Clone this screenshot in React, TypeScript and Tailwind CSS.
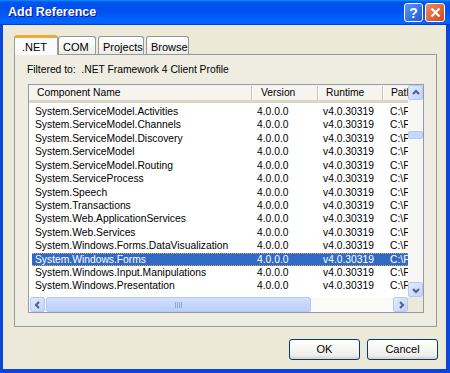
import React from "react";

const rows = [
  "System.ServiceModel.Activities",
  "System.ServiceModel.Channels",
  "System.ServiceModel.Discovery",
  "System.ServiceModel",
  "System.ServiceModel.Routing",
  "System.ServiceProcess",
  "System.Speech",
  "System.Transactions",
  "System.Web.ApplicationServices",
  "System.Web.Services",
  "System.Windows.Forms.DataVisualization",
  "System.Windows.Forms",
  "System.Windows.Input.Manipulations",
  "System.Windows.Presentation",
];

function Arrow({ dir }: { dir: "up" | "down" | "left" | "right" }) {
  const d = {
    up: "M2 6 L5 3 L8 6",
    down: "M2 4 L5 7 L8 4",
    left: "M6 2 L3 5 L6 8",
    right: "M4 2 L7 5 L4 8",
  }[dir];
  return (
    <svg width="10" height="10" viewBox="0 0 10 10">
      <path d={d} fill="none" stroke="#4D6185" strokeWidth="2" />
    </svg>
  );
}

function ScrollButton({ dir }: { dir: "up" | "down" | "left" | "right" }) {
  return (
    <div className="w-[15px] h-[15px] flex items-center justify-center rounded-[2px] border border-[#B5C9F5] bg-[linear-gradient(135deg,#E1EAFE,#C2D4FC)]">
      <Arrow dir={dir} />
    </div>
  );
}

function HeaderCell({ label, w, pl, first }: { label: string; w: string; pl: string; first?: boolean }) {
  return (
    <div className={`flex items-center h-full shrink-0 ${w}`}>
      {!first && <div className="w-[2px] h-[14px] border-l border-[#C7C5B2] bg-white shrink-0" />}
      <span className={`${pl} whitespace-nowrap`}>{label}</span>
    </div>
  );
}

export default function App() {
  return (
    <div className="w-[450px] h-[373px] flex flex-col bg-[#0A46DA] overflow-hidden font-['Liberation_Sans',Arial,sans-serif] text-[10.3px] text-black">
      {/* title bar */}
      <div className="h-[25px] shrink-0 flex items-center pl-[8px] pr-[5px] bg-[linear-gradient(to_bottom,#0997FF_0%,#0053EE_8%,#0050EE_40%,#0066FF_88%,#0066FF_93%,#005BFF_95%,#003DD7_96%,#003DD7_100%)]">
        <span className="text-white font-bold text-[12.5px] [text-shadow:1px_1px_#0F1089]">Add Reference</span>
        <div className="ml-auto flex gap-[2px]">
          <div className="w-[19px] h-[19px] rounded-[3px] border border-white bg-[linear-gradient(135deg,#5B93FC,#2157D7)] flex items-center justify-center text-white font-bold text-[14px] leading-none">?</div>
          <div className="w-[20px] h-[19px] rounded-[3px] border border-white bg-[linear-gradient(135deg,#EE8A66,#D34719)] flex items-center justify-center">
            <svg width="11" height="11" viewBox="0 0 11 11">
              <path d="M1.5 1.5 L9.5 9.5 M9.5 1.5 L1.5 9.5" stroke="white" strokeWidth="2.2" />
            </svg>
          </div>
        </div>
      </div>

      {/* client */}
      <div className="flex-1 ml-[3px] mr-[4px] mb-[4px] bg-[#ECE9D8] flex flex-col pl-[11px] pr-[9px] pt-[10px]">
        {/* tabs */}
        <div className="flex items-end h-[20px] relative z-10 -mb-px text-[11px]">
          <div className="w-[44px] h-[20px] bg-[#FCFCFE] border-x border-[#919B9C] border-t-[3px] border-t-[#F5A834] rounded-t-[3px] pl-[7px] pt-[1px]">.NET</div>
          <div className="w-[38px] h-[18px] mb-px bg-[linear-gradient(to_bottom,#FFFFFF,#ECEBE6)] border border-b-0 border-[#919B9C] rounded-t-[3px] pl-[4px] pt-[2px]">COM</div>
          <div className="w-[46px] ml-[2px] h-[18px] mb-px bg-[linear-gradient(to_bottom,#FFFFFF,#ECEBE6)] border border-b-0 border-[#919B9C] rounded-t-[3px] pl-[4px] pt-[2px]">Projects</div>
          <div className="w-[43px] ml-[2px] h-[18px] mb-px bg-[linear-gradient(to_bottom,#FFFFFF,#ECEBE6)] border border-b-0 border-[#919B9C] rounded-t-[3px] pl-[4px] pt-[2px]">Browse</div>
        </div>

        {/* panel */}
        <div className="h-[273px] border border-[#919B9C] bg-[#EFEDE1] flex flex-col">
          <div className="pl-[12px] pt-[8px] leading-[13px] whitespace-nowrap">Filtered to:&nbsp; .NET Framework 4 Client Profile</div>

          {/* list view */}
          <div className="ml-[13px] mt-[8px] w-[396px] h-[229px] border border-[#939CA6] bg-white flex flex-col">
            <div className="flex h-[212px]">
              <div className="flex-1 flex flex-col overflow-hidden">
                <div className="h-[18px] shrink-0 flex bg-[#F5F4EE] border-b-[3px] border-[#DAD7C7] whitespace-nowrap">
                  <HeaderCell label="Component Name" w="w-[222px]" pl="pl-[8px]" first />
                  <HeaderCell label="Version" w="w-[66px]" pl="pl-[8px]" />
                  <HeaderCell label="Runtime" w="w-[65px]" pl="pl-[7px]" />
                  <HeaderCell label="Path" w="w-[40px]" pl="pl-[7px]" />
                </div>
                <div className="pt-[2px] flex flex-col">
                  {rows.map((name) => {
                    const sel = name === "System.Windows.Forms";
                    return (
                      <div
                        key={name}
                        className={`h-[13.43px] ml-[3px] flex items-center whitespace-nowrap ${sel ? "bg-[#316AC5] text-white border-y border-dotted border-[#D9A860]" : ""}`}
                      >
                        <div className="w-[219px] shrink-0 pl-[3px] overflow-hidden">{name}</div>
                        <div className="w-[66px] shrink-0 pl-[6px]">4.0.0.0</div>
                        <div className="w-[65px] shrink-0 pl-[6px]">v4.0.30319</div>
                        <div className="w-[40px] shrink-0 pl-[8px]">C:\Program Files</div>
                      </div>
                    );
                  })}
                </div>
              </div>
              {/* vertical scrollbar */}
              <div className="w-[15px] shrink-0 flex flex-col bg-[#F7F7F4]">
                <ScrollButton dir="up" />
                <div className="flex-1 flex flex-col">
                  <div className="h-[31px]" />
                  <div className="h-[8px] rounded-[2px] border border-[#B5C9F5] bg-[#C8D7FC]" />
                </div>
                <ScrollButton dir="down" />
              </div>
            </div>
            {/* horizontal scrollbar */}
            <div className="h-[15px] flex bg-[#FBFBF8]">
              <div className="ml-[1px]">
                <ScrollButton dir="left" />
              </div>
              <div className="w-[265px] ml-[1px] rounded-[2px] border border-[#B5C9F5] bg-[linear-gradient(to_bottom,#D3E0FD,#BCCFFB)] flex items-center justify-center">
                <div className="flex gap-[1px]">
                  <div className="w-[1px] h-[6px] bg-[#8CA8EB]" />
                  <div className="w-[1px] h-[6px] bg-[#8CA8EB]" />
                  <div className="w-[1px] h-[6px] bg-[#8CA8EB]" />
                  <div className="w-[1px] h-[6px] bg-[#8CA8EB]" />
                </div>
              </div>
              <div className="flex-1" />
              <ScrollButton dir="right" />
              <div className="w-[15px] bg-[#ECE9D8]" />
            </div>
          </div>
        </div>

        {/* buttons */}
        <div className="flex justify-end gap-[7px] mt-[12px] -mr-px text-[11px]">
          <button className="w-[71px] h-[21px] rounded-[3px] border border-[#003C74] bg-[linear-gradient(to_bottom,#FFFFFF,#F0F0EA_80%,#D6D0C5)]">OK</button>
          <button className="w-[71px] h-[21px] rounded-[3px] border border-[#003C74] bg-[linear-gradient(to_bottom,#FFFFFF,#F0F0EA_80%,#D6D0C5)]">Cancel</button>
        </div>
      </div>
    </div>
  );
}
